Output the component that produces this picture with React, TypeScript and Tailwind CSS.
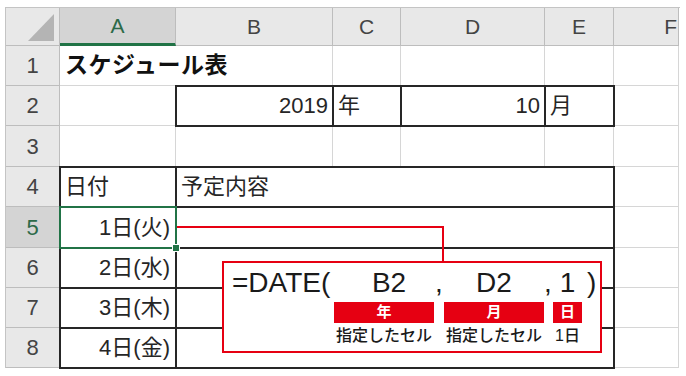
const cell = "border-r border-b border-[#d6d6d6] bg-white flex items-center text-[22px]";
const colHead = "border-r border-b border-[#bdbdbd] bg-[#e8e8e8] flex items-center justify-center text-[21px] text-[#444]";
const rowHead = "border-r border-b border-[#bdbdbd] bg-[#e8e8e8] flex items-center justify-center text-[22px] text-[#444]";
const boxed = "relative z-[1] outline-2 outline-[#262626] -outline-offset-1";

function Arg({ text, bar, label, w, shift }: { text: string; bar: string; label: string; w: string; shift?: string }) {
  return (
    <div className={`flex flex-col items-center ${w}`}>
      <div className={`h-[32px] leading-[32px] text-[28px] ${shift ?? ""}`}>{text}</div>
      <div className="mt-[3px] h-[21px] w-full bg-[#e60012] text-white text-[15px] font-bold flex items-center justify-center">{bar}</div>
      <div className="mt-[3px] h-[20px] leading-[20px] text-[16px] font-medium whitespace-nowrap">{label}</div>
    </div>
  );
}

export default function App() {
  const days = ["1日(火)", "2日(水)", "3日(木)", "4日(金)"];
  return (
    <div className="w-[686px] h-[376px] bg-white overflow-hidden font-['Liberation_Sans','Noto_Sans_CJK_JP',sans-serif] text-[#262626]">
      <div className="relative ml-[5px] mt-[7px] w-[675px] border-l border-t border-[#c4c4c4] grid grid-cols-[54px_116px_157px_68px_144px_69px_65px] grid-rows-[38px_40px_40px_41px_40px_41px_40px_40px_40px]">
        {/* column headers */}
        <div className="relative border-r border-b border-[#bdbdbd] bg-[#e8e8e8]">
          <svg className="absolute left-0 top-0" width="54" height="38">
            <polygon points="48,6 48,33 22,33" fill="#b4b4b4" />
          </svg>
        </div>
        <div className="border-r border-r-[#bdbdbd] border-b-[3px] border-b-[#217346] bg-[#d4d4d4] flex items-center justify-center text-[21px] text-[#2c6a48]">A</div>
        <div className={colHead}>B</div>
        <div className={colHead}>C</div>
        <div className={colHead}>D</div>
        <div className={colHead}>E</div>
        <div className="border-r border-b border-[#bdbdbd] bg-[#e8e8e8] flex items-center justify-end pr-[1px] text-[21px] text-[#444]">F</div>

        {/* row 1 */}
        <div className={rowHead}>1</div>
        <div className={`${cell} col-span-2 pl-[5px] font-bold text-[23px] tracking-[0.5px] whitespace-nowrap text-[#111]`}>スケジュール表</div>
        <div className={cell} />
        <div className={cell} />
        <div className={cell} />
        <div className={cell} />

        {/* row 2 */}
        <div className={rowHead}>2</div>
        <div className={cell} />
        <div className={`${cell} ${boxed} justify-end pr-[4px]`}>2019</div>
        <div className={`${cell} ${boxed} bg-[#e2efda] pl-[5px]`}>年</div>
        <div className={`${cell} ${boxed} justify-end pr-[4px]`}>10</div>
        <div className={`${cell} ${boxed} bg-[#e2efda] pl-[5px]`}>月</div>
        <div className={cell} />

        {/* row 3 */}
        <div className={rowHead}>3</div>
        <div className={cell} />
        <div className={cell} />
        <div className={cell} />
        <div className={cell} />
        <div className={cell} />
        <div className={cell} />

        {/* row 4 */}
        <div className={rowHead}>4</div>
        <div className={`${cell} ${boxed} bg-[#f8cbad] pl-[5px]`}>日付</div>
        <div className={`${cell} ${boxed} col-span-4 bg-[#f8cbad] pl-[5px]`}>予定内容</div>
        <div className={cell} />

        {/* rows 5-8 */}
        {days.map((d, i) => (
          <div key={d} className="contents">
            {i === 0 ? (
              <div className="border-r border-b border-[#bdbdbd] bg-[#d4d4d4] flex items-center justify-center text-[22px] text-[#2c6a48]">5</div>
            ) : (
              <div className={rowHead}>{i + 5}</div>
            )}
            {i === 0 ? (
              <div className={`${cell} relative z-[2] outline-2 outline-[#217346] -outline-offset-1 justify-end pr-[5px]`}>
                {d}
                <span className="absolute -right-[5px] -bottom-[5px] w-[8px] h-[8px] bg-[#217346] border border-white" />
              </div>
            ) : (
              <div className={`${cell} ${boxed} justify-end pr-[5px]`}>{d}</div>
            )}
            <div className={`${cell} ${boxed} col-span-4`} />
            <div className={cell} />
          </div>
        ))}

        {/* connector line */}
        <div className="absolute z-[3] left-[171px] top-[218px] w-[267px] h-[35px] border-t-2 border-r-2 border-[#e60012]" />

        {/* callout */}
        <div className="absolute z-[3] left-[216px] top-[253px] w-[380px] h-[92px] border-2 border-[#e60012] bg-white text-[#1a1a1a] flex items-start pt-[4px] pl-[8px]">
          <div className="w-[102px] h-[32px] leading-[32px] text-[28px] whitespace-nowrap">=DATE(</div>
          <Arg text="B2" bar="年" label="指定したセル" w="w-[100px]" shift="pl-[10px]" />
          <div className="w-[10px] h-[32px] leading-[32px] text-[28px] text-center">,</div>
          <Arg text="D2" bar="月" label="指定したセル" w="w-[100px]" />
          <div className="w-[9px] h-[32px] leading-[32px] text-[28px]">,</div>
          <Arg text="1" bar="日" label="1日" w="w-[29px]" />
          <div className="ml-[5px] h-[32px] leading-[32px] text-[28px]">)</div>
        </div>
      </div>
    </div>
  );
}
